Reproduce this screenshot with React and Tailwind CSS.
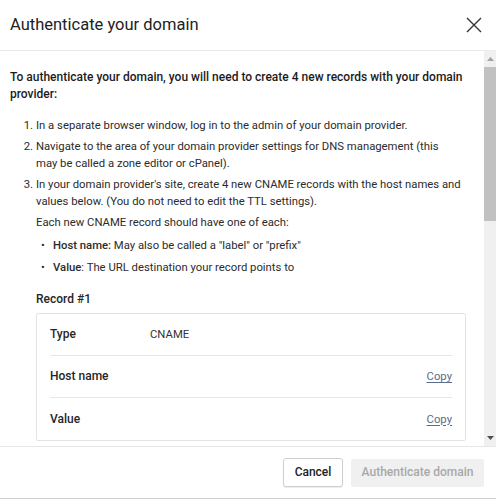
import React from "react";

const font = { fontFamily: 'Roboto, "Open Sans", sans-serif' };

function Row({ label, value, copy, last }) {
  return (
    <div className={`flex items-center h-[42px] ${last ? "" : "border-b border-[#e6e6e6]"}`}>
      <div className="w-[100px] font-medium text-[12px] text-[#262626]">{label}</div>
      <div className="flex-1 text-[#333]">{value}</div>
      {copy && <span className="text-[#5b6b8c] underline underline-offset-2">Copy</span>}
    </div>
  );
}

export default function App() {
  return (
    <div className="w-[496px] h-[499px] bg-white flex flex-col border-b border-[#cfcfcf] overflow-hidden text-[11.3px] leading-[17px] text-[#2b2b2b]" style={font}>
      <div className="h-[51px] shrink-0 flex items-center justify-between pl-[10px] pr-[14px] border-b border-[#ebebeb]">
        <h1 className="text-[16.5px] text-[#222] -mt-[2px]">Authenticate your domain</h1>
        <svg width="16" height="16" viewBox="0 0 16 16" className="text-[#333]">
          <path d="M1 1 L15 15 M15 1 L1 15" stroke="currentColor" strokeWidth="1.4" fill="none" />
        </svg>
      </div>
      <div className="flex-1 flex min-h-0">
        <div className="flex-1 overflow-hidden pl-[10px] pr-[11px] pt-[18px]">
          <p className="font-medium text-[12px] text-[#1c1c1c] pr-[7px]">
            To authenticate your domain, you will need to create 4 new records with your domain provider:
          </p>
          <ol className="mt-[14px] flex flex-col gap-[4px]">
            <li className="flex">
              <span className="w-[26px] shrink-0 text-right pr-[3px]">1.</span>
              <span>In a separate browser window, log in to the admin of your domain provider.</span>
            </li>
            <li className="flex">
              <span className="w-[26px] shrink-0 text-right pr-[3px]">2.</span>
              <span className="pr-[24px]">Navigate to the area of your domain provider settings for DNS management (this may be called a zone editor or cPanel).</span>
            </li>
            <li className="flex">
              <span className="w-[26px] shrink-0 text-right pr-[3px]">3.</span>
              <div className="flex-1 min-w-0">
                <p className="pr-[7px]">In your domain provider's site, create 4 new CNAME records with the host names and values below. (You do not need to edit the TTL settings).</p>
                <p className="mt-[4px]">Each new CNAME record should have one of each:</p>
                <ul className="mt-[6px] flex flex-col gap-[5px]">
                  <li className="flex">
                    <span className="w-[17px] shrink-0 pl-[5px]">•</span>
                    <span><b className="font-medium">Host name:</b> May also be called a "label" or "prefix"</span>
                  </li>
                  <li className="flex">
                    <span className="w-[17px] shrink-0 pl-[5px]">•</span>
                    <span><b className="font-medium">Value</b>: The URL destination your record points to</span>
                  </li>
                </ul>
                <p className="mt-[15px] font-medium text-[12px] text-[#262626]">Record #1</p>
                <div className="mt-[5px] mr-[7px] border border-[#e3e3e3] rounded-[2px] px-[13px]">
                  <Row label="Type" value="CNAME" />
                  <Row label="Host name" value="" copy />
                  <Row label="Value" value="" copy last />
                </div>
              </div>
            </li>
          </ol>
        </div>
        <div className="w-[12px] shrink-0 bg-[#f0f0f0] flex flex-col">
          <div className="h-[16px] flex items-center justify-center">
            <svg width="7" height="4" viewBox="0 0 7 4"><path d="M0 4 L3.5 0 L7 4Z" fill="#a3a3a3" /></svg>
          </div>
          <div className="h-[154px] bg-[#c1c1c1]" />
          <div className="flex-1" />
          <div className="h-[16px] flex items-center justify-center">
            <svg width="7" height="4" viewBox="0 0 7 4"><path d="M0 0 L3.5 4 L7 0Z" fill="#505050" /></svg>
          </div>
        </div>
      </div>
      <div className="h-[52px] shrink-0 border-t border-[#e6e6e6] flex items-center justify-end gap-[8px] pr-[12px]">
        <button className="w-[60px] h-[29px] border border-[#cfcfcf] rounded-[3px] bg-white font-medium text-[12px] text-[#222] shadow-[0_1px_1px_rgba(0,0,0,0.08)]">Cancel</button>
        <button className="w-[133px] h-[28px] rounded-[2px] bg-[#f0f0f0] font-medium text-[12px] text-[#a8a8a8]">Authenticate domain</button>
      </div>
    </div>
  );
}
